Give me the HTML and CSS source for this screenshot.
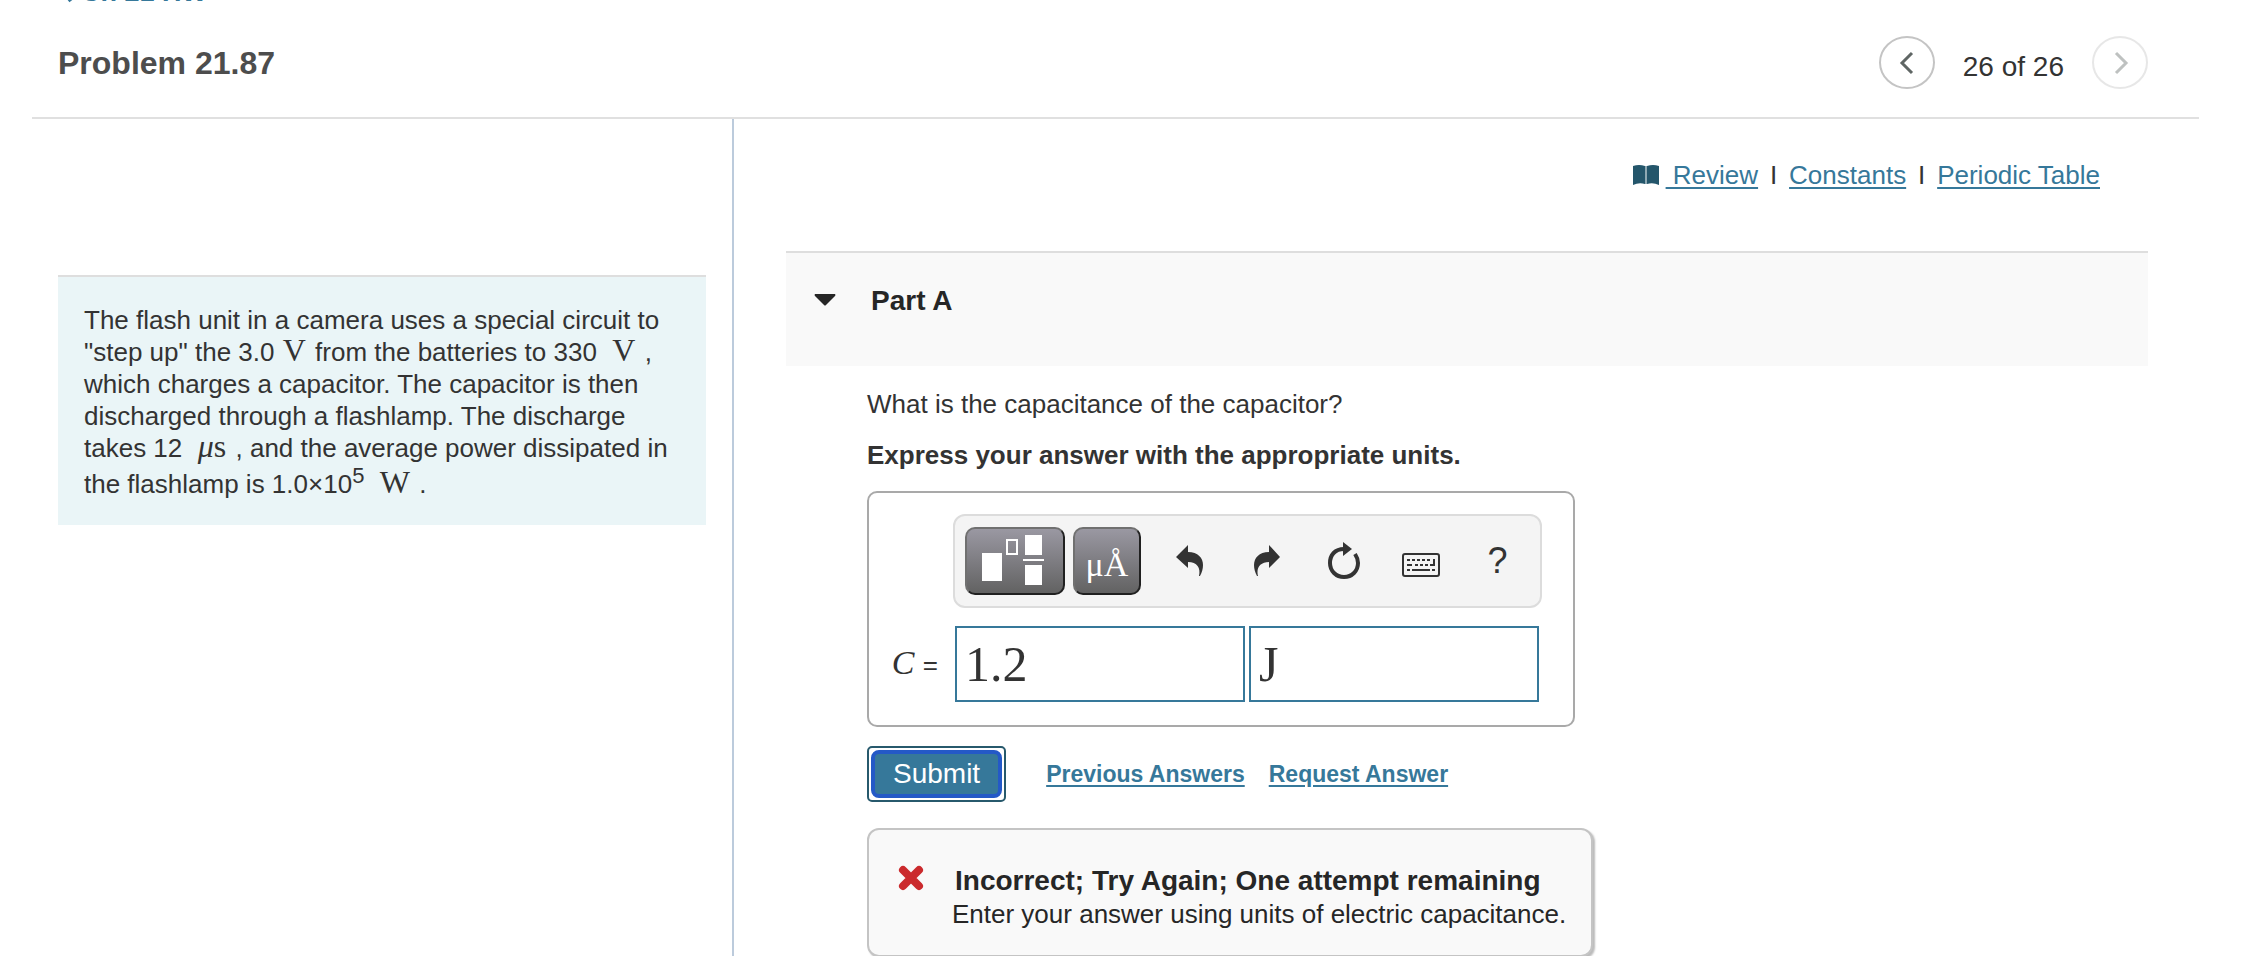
FILE: index.html
```html
<!DOCTYPE html>
<html lang="en">
<head>
<meta charset="utf-8">
<title>Problem 21.87</title>
<link rel="stylesheet" href="styles.css">
</head>
<body>
<div class="page">
  <nav class="crumb"><a href="#"><svg width="12" height="22" viewBox="0 0 12 22"><path d="M10 2 3 11l7 9" fill="none" stroke="#36789a" stroke-width="4"/></svg>Ch 21 HW</a></nav>
  <header class="head">
    <h1>Problem 21.87</h1>
    <div class="pager">
      <button class="round" type="button" aria-label="Previous">
        <svg width="24" height="28" viewBox="0 0 24 28"><path d="M17 4 7 14l10 10" fill="none" stroke="#5f6664" stroke-width="3"/></svg>
      </button>
      <span class="count">26 of 26</span>
      <button class="round" type="button" aria-label="Next" disabled>
        <svg width="24" height="28" viewBox="0 0 24 28"><path d="M8 4l10 10L8 24" fill="none" stroke="#5f6664" stroke-width="3"/></svg>
      </button>
    </div>
  </header>
  <div class="cols">
    <aside class="left">
      <p class="problem">The flash unit in a camera uses a special circuit to "step up" the 3.0 <span class="m">V</span> from the batteries to 330 &nbsp;<span class="m">V</span> , which charges a capacitor. The capacitor is then discharged through a flashlamp. The discharge takes 12 &nbsp;<span class="m"><i>μ</i>s</span> , and the average power dissipated in the flashlamp is 1.0×10<sup>5</sup> &nbsp;<span class="m">W</span> .</p>
    </aside>
    <main class="right">
      <div class="refs">
        <svg class="book" width="26" height="20" viewBox="0 0 26 20"><path d="M0 1Q6-1 12 1V19Q6 17 0 20ZM14 1q6-2 12 0v19q-6-3-12-1Z" fill="#24566b"/><path d="M12 1h2v18h-2z" fill="#8fa9b3"/></svg>
        <a href="#">&nbsp;Review</a><span class="bar">I</span><a href="#">Constants</a><span class="bar">I</span><a href="#">Periodic Table</a>
      </div>
      <section>
        <div class="part">
          <svg width="22" height="12" viewBox="0 0 22 12"><path d="M1 0h20q1 1 0 2l-9 9q-1 1-2 0L1 2Q0 1 1 0Z" fill="#262626"/></svg>
          <h2>Part A</h2>
        </div>
        <form class="body">
          <p class="ask">What is the capacitance of the capacitor?</p>
          <p class="express">Express your answer with the appropriate units.</p>
          <div class="answer">
            <div class="tools">
              <button class="dark wide" type="button" aria-label="Templates">
                <svg width="62" height="50" viewBox="0 0 62 50" fill="#fff"><path d="M0 18h20v28H0zM43 0h17v20H43zM43 30h17v20H43zM41 24h21v2H41z"/><path d="M25 5h10v14H25z" fill="none" stroke="#fff" stroke-width="2"/></svg>
              </button>
              <button class="dark units" type="button">μÅ</button>
              <button class="tool" type="button" aria-label="Undo">
                <svg width="28" height="32" viewBox="0 0 28 32"><path d="M12 0v7c10 0 15 6 15 13 0 4-1 7-3 11h-1c2-8-2-14-11-14v6L0 12Z" fill="#333"/></svg>
              </button>
              <button class="tool" type="button" aria-label="Redo">
                <svg width="28" height="32" viewBox="0 0 28 32"><path d="M16 0v7C6 7 1 13 1 20c0 4 1 7 3 11h1C3 23 7 17 16 17v6l11-11Z" fill="#333"/></svg>
              </button>
              <button class="tool" type="button" aria-label="Reset">
                <svg width="34" height="38" viewBox="0 0 34 38"><path d="M17 7C8 7 3 13 3 21s6 14 14 14 14-6 14-14c0-4-1-6-3-9" fill="none" stroke="#333" stroke-width="4"/><path d="M16 0l9 7-9 7Z" fill="#333"/></svg>
              </button>
              <button class="tool" type="button" aria-label="Keyboard">
                <svg class="kb" width="38" height="24" viewBox="0 0 38 24"><rect x="1" y="1" width="36" height="22" rx="2" fill="none" stroke="#333" stroke-width="2"/><path d="M5 7h24M13 12h14M5 17h3M30 17h3" stroke="#333" stroke-width="2" stroke-dasharray="3 2"/><path d="M5 12h5M10 17h18M28 12h4V6" fill="none" stroke="#333" stroke-width="2"/></svg>
              </button>
              <button class="tool help" type="button">?</button>
            </div>
            <div class="entry">
              <label for="value"><i>C</i> <span class="eq">=</span></label>
              <input id="value" type="text" value="1.2">
              <input id="unit" type="text" value="J" aria-label="Units">
            </div>
          </div>
          <div class="actions">
            <button class="submit" type="submit"><span>Submit</span></button>
            <a href="#">Previous Answers</a>
            <a href="#">Request Answer</a>
          </div>
          <div class="feedback" role="status">
            <svg width="28" height="28" viewBox="0 0 28 28"><path d="M6 6l16 16M22 6 6 22" stroke="#cb2a2d" stroke-width="8" stroke-linecap="round"/></svg>
            <div>
              <strong>Incorrect; Try Again; One attempt remaining</strong>
              <p>Enter your answer using units of electric capacitance.</p>
            </div>
          </div>
        </form>
      </section>
    </main>
  </div>
</div>
</body>
</html>
```
FILE: styles.css
```css
* { box-sizing: border-box; }
html { height: 100%; }
body {
  margin: 0;
  height: 100%;
  overflow: hidden;
  background: #fff;
  color: #333;
  font-family: "Liberation Sans", Arial, sans-serif;
  font-size: 26px;
  line-height: 32px;
}
h1, h2, p { margin: 0; }
a { color: #36789a; text-decoration-thickness: 2px; text-underline-offset: 3px; }
button { font: inherit; padding: 0; cursor: pointer; }
svg { display: block; flex: none; }

.page { min-height: 100%; display: flex; flex-direction: column; padding: 0 50px 0 32px; }
.crumb { height: 8px; padding-left: 29px; display: flex; align-items: flex-end; }
.crumb a { display: flex; align-items: center; gap: 8px; text-decoration: none; font-size: 27px; font-weight: bold; }
.head {
  display: flex;
  justify-content: space-between;
  align-items: center;
  height: 111px;
  padding: 0 51px 0 26px;
  border-bottom: 2px solid #e0e0e0;
}
h1 { font-size: 32px; color: #4d4d4d; }
.pager { display: flex; align-items: center; gap: 28px; }
.count { font-size: 28px; padding-top: 8px; }
.round {
  display: flex;
  align-items: center;
  justify-content: center;
  width: 56px;
  height: 53px;
  border: 2px solid #c4c4c4;
  border-radius: 50%;
  background: #fff;
}
.round:disabled { opacity: .4; }

.cols { flex: 1; display: grid; grid-template-columns: minmax(0, 702fr) minmax(0, 1465fr); }
.left { border-right: 2px solid #bccbdc; padding: 156px 26px 0 26px; }
.problem {
  border-top: 2px solid #dedede;
  background: #eaf5f7;
  padding: 27px 26px 25px;
}
.m { margin: 0 2px 0 1px; font-family: "Liberation Serif", "Times New Roman", serif; font-size: 32px; line-height: 24px; }
sup { font-size: 22px; line-height: 24px; }
.right { padding: 40px 51px 0 52px; }
.refs { display: flex; align-items: center; justify-content: flex-end; padding-right: 48px; }
.book { margin-right: 7px; }
.bar { width: 31px; text-align: center; }
section { margin-top: 60px; }
.part {
  display: flex;
  gap: 35px;
  height: 115px;
  padding: 32px 28px;
  border-top: 2px solid #dedede;
  background: #f9f9f9;
  color: #262626;
}
.part svg { margin-top: 9px; }
h2 { font-size: 28px; }
.body { padding-left: 81px; display: flex; flex-direction: column; align-items: flex-start; }
.ask { margin-top: 22px; }
.express { margin-top: 19px; font-weight: bold; }
.answer {
  display: flex;
  flex-direction: column;
  align-items: flex-end;
  margin-top: 20px;
  width: 708px;
  padding: 21px 31px 23px 20px;
  border: 2px solid #a9a9a9;
  border-radius: 10px;
}
.tools {
  display: flex;
  align-items: center;
  width: 589px;
  height: 94px;
  padding-left: 10px;
  border: 2px solid #dcdcdc;
  border-radius: 12px;
  background: #f4f4f4;
}
.dark {
  display: flex;
  align-items: center;
  justify-content: center;
  flex: none;
  height: 68px;
  border: 2px solid;
  border-color: #707070 #202020 #202020 #707070;
  border-radius: 10px;
  background: linear-gradient(#9a98a2, #626262);
  color: #fff;
}
.wide { width: 100px; margin-right: 8px; padding: 0 4px 2px 0; }
.units { width: 68px; margin-right: 10px; padding-top: 8px; font-family: "Liberation Serif", "Times New Roman", serif; font-size: 34px; }
.tool {
  display: flex;
  align-items: center;
  justify-content: center;
  flex: none;
  width: 77px;
  height: 68px;
  border: 0;
  background: none;
  color: #333;
}
.kb { margin-top: 8px; }
.help { font-size: 36px; }
.entry { display: flex; align-items: center; gap: 4px; margin: 18px 3px 0 0; }
.entry label { margin-right: 13px; font-family: "Liberation Serif", "Times New Roman", serif; font-size: 34px; }
.eq { font-family: "Liberation Sans", Arial, sans-serif; font-size: 26px; }
.entry input {
  width: 290px;
  height: 76px;
  padding: 0 8px;
  border: 2px solid #36789a;
  color: #333;
  font-family: "Liberation Serif", "Times New Roman", serif;
  font-size: 50px;
}
.actions { display: flex; align-items: center; gap: 24px; margin-top: 19px; }
.actions a { font-size: 23px; font-weight: bold; }
.submit {
  height: 56px;
  margin-right: 16px;
  padding: 2px;
  border: 2px solid #27596c;
  border-radius: 5px;
  background: #fff;
  color: #fff;
  font-size: 28px;
}
.submit span {
  display: flex;
  align-items: center;
  height: 48px;
  padding: 0 18px;
  border: 4px solid #2459c7;
  border-radius: 8px;
  background: #36789a;
}
.feedback {
  display: flex;
  gap: 27px;
  margin-top: 26px;
  width: 726px;
  padding: 34px 0 25px 28px;
  border: 2px solid #c4c4c4;
  border-radius: 12px;
  background: #f9f9f9;
  box-shadow: 2px 2px 2px #bbb;
  color: #262626;
}
.feedback strong { display: block; padding-left: 3px; font-size: 28px; line-height: 34px; }
```
